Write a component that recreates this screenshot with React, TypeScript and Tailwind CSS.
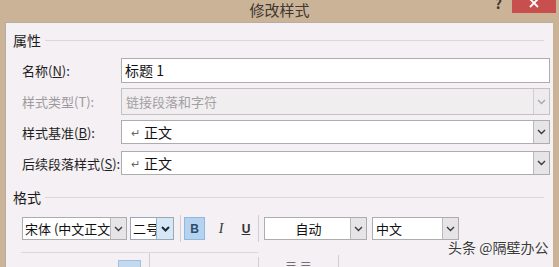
import React from "react";

function Chevron({ dark = true, bold = false }: { dark?: boolean; bold?: boolean }) {
  return (
    <svg width="9" height="6" viewBox="0 0 9 6">
      <path
        d="M1 1 L4.5 4.5 L8 1"
        fill="none"
        stroke={dark ? (bold ? "#1b2a3a" : "#3a3a3a") : "#a8a8a8"}
        strokeWidth={bold ? 2 : 1.4}
      />
    </svg>
  );
}

function DropBtn({ dark = true, className = "" }: { dark?: boolean; className?: string }) {
  return (
    <div className={`w-[16px] h-full flex items-center justify-center border-l border-[#b9b9b9] bg-[#e6e4e6] ${className}`}>
      <Chevron dark={dark} />
    </div>
  );
}

function Label({ text, k, disabled = false }: { text: string; k: string; disabled?: boolean }) {
  return (
    <div className={`w-[99px] text-[13px] leading-none ${disabled ? "text-[#9d9a9d]" : "text-[#1e1e1e]"}`}>
      {text}(<span className={disabled ? "" : "underline"}>{k}</span>):
    </div>
  );
}

function SectionHeader({ text }: { text: string }) {
  return (
    <div className="h-[20px] flex items-center pl-[7px] pr-[9px]">
      <span className="text-[14px] text-[#1a1a1a] leading-none">{text}</span>
      <div className="flex-1 ml-[4px] h-px bg-[#dcd7dc]" />
    </div>
  );
}

export default function App() {
  return (
    <div className="w-[559px] h-[267px] overflow-hidden bg-[#cbb398] flex flex-col font-['Noto_Sans_CJK_SC','Noto_Sans',sans-serif] relative">
      {/* Title bar */}
      <div className="h-[22px] grid grid-cols-[1fr_auto_1fr] shrink-0">
        <div />
        <div className="text-[15px] text-[#3e3832] leading-none pt-[2px]">修改样式</div>
        <div className="flex justify-end items-start">
          <div className="text-[14px] font-bold text-[#3a342e] leading-none mt-[-4px] mr-[10px]">?</div>
          <div className="w-[44px] h-[13px] bg-[#c7504f] flex justify-center items-start overflow-hidden mr-[3px]">
            <svg width="12" height="12" viewBox="0 0 12 12" className="mt-[-3px]">
              <path d="M2 2 L10 10 M10 2 L2 10" stroke="#fff" strokeWidth="1.8" />
            </svg>
          </div>
        </div>
      </div>

      {/* Body */}
      <div className="flex-1 ml-[5px] mr-[6px] bg-[#f4f0f3] border-t border-l border-[#b8ada3] pt-[7px] flex flex-col">
        <SectionHeader text="属性" />

        <div className="mt-[8px] h-[25px] flex items-center pl-[16px]">
          <Label text="名称" k="N" />
          <div className="w-[429px] h-full border border-[#adadad] bg-white flex items-center pl-[3px] text-[14px] text-[#111]">
            标题 1
          </div>
        </div>

        <div className="mt-[5px] h-[27px] flex items-center pl-[16px]">
          <Label text="样式类型" k="T" disabled />
          <div className="w-[429px] h-full border border-[#c3c1c3] bg-[#f1eef0] flex items-center">
            <div className="flex-1 pl-[4px] text-[13px] text-[#a3a0a3]">链接段落和字符</div>
            <DropBtn dark={false} className="bg-[#eeebee] border-[#d0cdd0]" />
          </div>
        </div>

        <div className="mt-[5px] h-[24px] flex items-center pl-[16px]">
          <Label text="样式基准" k="B" />
          <div className="w-[429px] h-full border border-[#adadad] bg-white flex items-center">
            <div className="flex-1 pl-[9px] text-[14px] text-[#111] flex items-center">
              <span className="text-[11px] text-[#666] mr-[4px]">↵</span>正文
            </div>
            <DropBtn />
          </div>
        </div>

        <div className="mt-[7px] h-[24px] flex items-center pl-[16px]">
          <Label text="后续段落样式" k="S" />
          <div className="w-[429px] h-full border border-[#adadad] bg-white flex items-center">
            <div className="flex-1 pl-[9px] text-[14px] text-[#111] flex items-center">
              <span className="text-[11px] text-[#666] mr-[4px]">↵</span>正文
            </div>
            <DropBtn />
          </div>
        </div>

        <div className="mt-[12px]">
          <SectionHeader text="格式" />
        </div>

        {/* Toolbar */}
        <div className="mt-[10px] h-[23px] flex items-center pl-[16px]">
          <div className="w-[105px] h-full border border-[#adadad] bg-white flex items-center overflow-hidden">
            <div className="flex-1 pl-[2px] text-[13px] text-[#111] whitespace-nowrap overflow-hidden">宋体 (中文正文)</div>
            <DropBtn className="bg-[#dddbdd]" />
          </div>
          <div className="ml-[3px] w-[44px] h-full border border-[#9aa7b4] bg-white flex items-center overflow-hidden">
            <div className="flex-1 pl-[2px] text-[13px] text-[#111] whitespace-nowrap overflow-hidden">二号</div>
            <div className="w-[17px] h-full flex items-center justify-center border-l border-[#8fb4d6] bg-[#d6e7f6]">
              <Chevron bold />
            </div>
          </div>
          <div className="ml-[6px] w-px h-[27px] bg-[#d2ced2]" />
          <div className="ml-[3px] w-[21px] h-full bg-[#b5d3ee] border border-[#8db9e2] flex items-center justify-center text-[12px] font-bold text-[#2f4c6b] font-['Liberation_Sans',sans-serif]">
            B
          </div>
          <div className="ml-[10px] w-[12px] text-center text-[14px] italic text-[#333] font-['Liberation_Serif',serif]">I</div>
          <div className="ml-[13px] w-[12px] text-center text-[12px] font-bold underline text-[#333] font-['Liberation_Sans',sans-serif]">U</div>
          <div className="ml-[6px] w-px h-[27px] bg-[#d2ced2]" />
          <div className="ml-[5px] w-[103px] h-full border border-[#adadad] bg-white flex items-center">
            <div className="flex-1 text-center text-[13px] text-[#111] pl-[2px]">自动</div>
            <DropBtn className="bg-[#dddbdd]" />
          </div>
          <div className="ml-[5px] w-[87px] h-full border border-[#adadad] bg-white flex items-center">
            <div className="flex-1 pl-[3px] text-[13px] text-[#111]">中文</div>
            <DropBtn className="bg-[#dddbdd]" />
          </div>
        </div>

        {/* Partially visible next row */}
        <div className="mt-[12px] flex-1 flex pl-[15px]">
          <div className="w-[237px] border-t border-[#dcd7dc] flex">
            <div className="w-[97px]" />
            <div className="mt-[7px] w-[23px] bg-[#c3d9ee] border border-[#9fc0e0]" />
            <div className="ml-[8px] w-px bg-[#d2ced2]" />
          </div>
          <div className="w-px mt-[5px] bg-[#d2ced2]" />
          <div className="ml-[26px] pt-[7px] text-[12px] text-[#555] leading-none">≡ ≡</div>
          <div className="ml-[26px] w-px mt-[3px] bg-[#d2ced2]" />
        </div>
      </div>

      {/* Watermark */}
      <div className="absolute left-[448px] top-[240px] text-[14px] text-[#3a3a3a] leading-none [text-shadow:0_0_2px_#fff]">
        头条 @隔壁办公
      </div>
    </div>
  );
}
